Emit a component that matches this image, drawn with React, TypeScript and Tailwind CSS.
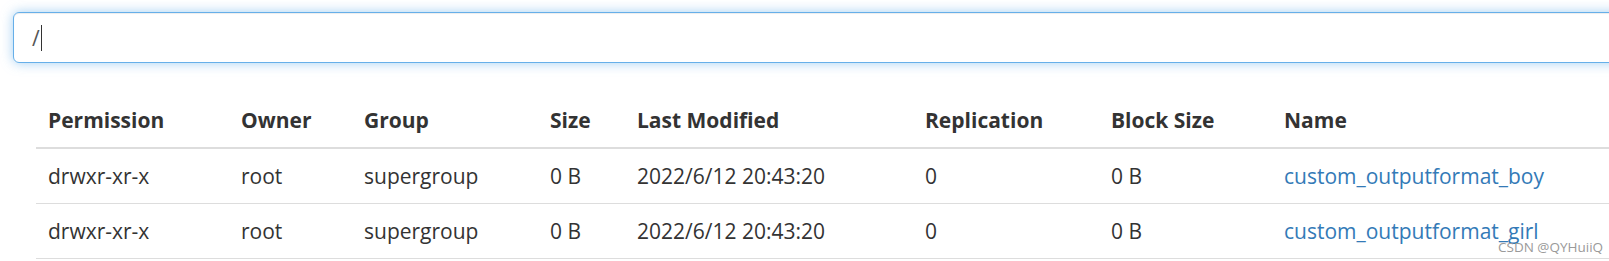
const rows = [
  { perm: "drwxr-xr-x", owner: "root", group: "supergroup", size: "0 B", modified: "2022/6/12 20:43:20", repl: "0", block: "0 B", name: "custom_outputformat_boy" },
  { perm: "drwxr-xr-x", owner: "root", group: "supergroup", size: "0 B", modified: "2022/6/12 20:43:20", repl: "0", block: "0 B", name: "custom_outputformat_girl" },
];

const cols = [
  { label: "Permission", w: "w-[193px]" },
  { label: "Owner", w: "w-[123px]" },
  { label: "Group", w: "w-[186px]" },
  { label: "Size", w: "w-[87px]" },
  { label: "Last Modified", w: "w-[288px]" },
  { label: "Replication", w: "w-[186px]" },
  { label: "Block Size", w: "w-[173px]" },
  { label: "Name", w: "w-[400px]" },
];

export default function App() {
  return (
    <div className="relative h-[261px] w-[1609px] overflow-hidden bg-white font-['Open_Sans',sans-serif] text-[21px] leading-[30px] text-[#333]">
      <div className="pl-[13px] pt-[12px]">
        <div className="flex h-[51px] w-[1640px] items-center rounded-[6px] border border-[#66afe9] px-[18px] text-[#555] shadow-[inset_0_1px_1px_rgba(0,0,0,0.075),0_0_12px_rgba(102,175,233,0.6)]">
          <span>/</span>
          <span className="ml-[1px] h-[26px] w-px bg-[#333]" />
        </div>
      </div>

      <table className="ml-[36px] mt-[30px] w-[1636px] table-fixed border-collapse">
        <thead>
          <tr className="border-b-2 border-[#ddd]">
            {cols.map((c) => (
              <th key={c.label} className={`${c.w} p-[12px] text-left font-bold`}>
                {c.label}
              </th>
            ))}
          </tr>
        </thead>
        <tbody>
          {rows.map((r) => (
            <tr key={r.name} className="border-b border-[#ddd]">
              <td className="p-[12px]">{r.perm}</td>
              <td className="p-[12px]">{r.owner}</td>
              <td className="p-[12px]">{r.group}</td>
              <td className="p-[12px]">{r.size}</td>
              <td className="p-[12px]">{r.modified}</td>
              <td className="p-[12px]">{r.repl}</td>
              <td className="p-[12px]">{r.block}</td>
              <td className="p-[12px]">
                <a href="#" className="text-[#337ab7]">{r.name}</a>
              </td>
            </tr>
          ))}
        </tbody>
      </table>

      <span className="absolute left-[1498px] top-[238px] text-[13.5px] leading-[18px] text-[#9a9a9a]">
        CSDN @QYHuiiQ
      </span>
    </div>
  );
}
